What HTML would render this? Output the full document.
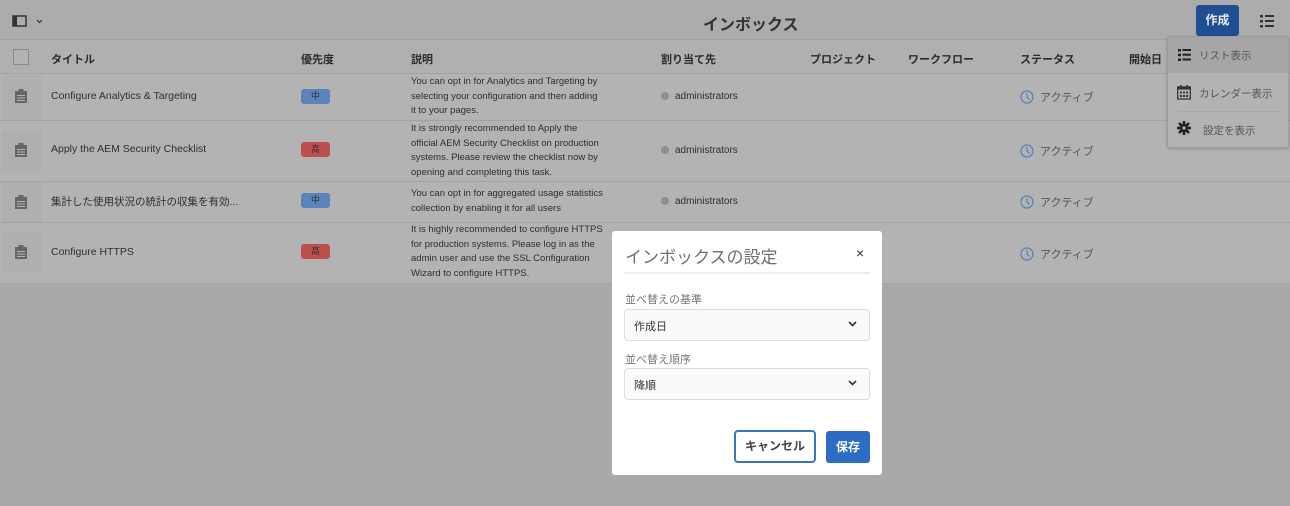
<!DOCTYPE html><html><head><meta charset="utf-8"><style>
*{box-sizing:border-box;margin:0;padding:0}
body{width:1290px;height:506px;overflow:hidden;background:#a9a9a9;font-family:"Liberation Sans","Noto Sans CJK JP",sans-serif;color:#333;position:relative;font-size:11px}
.a{position:absolute}
.top{left:0;top:0;width:1290px;height:40px;background:#acacac;border-bottom:1px solid #a2a2a2}
.row{left:0;width:1290px;background:#b3b3b3;border-bottom:1px solid #a3a3a3}
.hd{font-weight:bold;font-size:11px;color:#2b2b2b;top:51px}
.t{font-size:10.5px;color:#2e2e2e}
.d{font-size:9.5px;color:#2e2e2e;line-height:14.5px;left:411px;white-space:nowrap}
.ic{left:2px;width:40px;background:#afafaf}
.badge{left:301px;width:29px;height:15px;border-radius:3px;font-size:9px;text-align:center;line-height:15px;color:#333}
.adm{left:661px;font-size:10px;color:#2e2e2e}
.adm:before{content:"";display:inline-block;width:8px;height:8px;border-radius:50%;background:#8f8f8f;margin-right:6px;vertical-align:-1px}
.st{left:1020px;font-size:11px;color:#555}
.st svg{vertical-align:-3px;margin-right:6px}
</style></head><body>
<div class="a top"></div>
<svg class="a" style="left:12px;top:15px" width="30" height="12"><rect x="1" y="1" width="13" height="10" fill="none" stroke="#333" stroke-width="1.5"/><rect x="1" y="1" width="4" height="10" fill="#333"/><path d="M25 5l2.5 2.5 2.5-2.5" fill="none" stroke="#333" stroke-width="1.2"/></svg>
<div class="a" style="left:703px;top:11px;font-size:16px;font-weight:bold;color:#333">インボックス</div>
<div class="a" style="left:1196px;top:5px;width:43px;height:31px;background:#1f4f92;border-radius:3px;color:#e8e8e8;font-weight:bold;font-size:12px;text-align:center;line-height:31px">作成</div>
<svg class="a" style="left:1260px;top:15px" width="14" height="13"><g fill="#333"><rect x="0" y="0" width="3" height="2.5"/><rect x="0" y="5" width="3" height="2.5"/><rect x="0" y="10" width="3" height="2.5"/><rect x="5" y="0" width="9" height="2"/><rect x="5" y="5" width="9" height="2"/><rect x="5" y="10" width="9" height="2"/></g></svg>

<div class="a row" style="top:40px;height:34px;background:#b0b0b0"></div>
<div class="a" style="left:13px;top:49px;width:16px;height:16px;border:1px solid #8a8a8a;background:#b3b3b3"></div>
<div class="a hd" style="left:51px">タイトル</div>
<div class="a hd" style="left:301px">優先度</div>
<div class="a hd" style="left:411px">説明</div>
<div class="a hd" style="left:661px">割り当て先</div>
<div class="a hd" style="left:810px">プロジェクト</div>
<div class="a hd" style="left:908px">ワークフロー</div>
<div class="a hd" style="left:1020px">ステータス</div>
<div class="a hd" style="left:1129px">開始日</div>

<div class="a row" style="top:74px;height:47px"></div>
<div class="a row" style="top:121px;height:61px"></div>
<div class="a row" style="top:182px;height:41px"></div>
<div class="a row" style="top:223px;height:61px"></div>
<div class="a ic" style="top:75px;height:44px"></div>
<div class="a ic" style="top:130px;height:41px"></div>
<div class="a ic" style="top:182px;height:40px"></div>
<div class="a ic" style="top:233px;height:40px"></div>

<svg width="0" height="0" style="position:absolute"><defs><symbol id="clip" viewBox="0 0 12 14"><rect x="0" y="2" width="12" height="12" fill="#666"/><rect x="3.5" y="0" width="5" height="3.5" fill="#666"/><g fill="#b3b3b3"><rect x="2" y="6" width="8" height="1"/><rect x="2" y="8.5" width="8" height="1"/><rect x="2" y="11" width="8" height="1"/></g></symbol>
<symbol id="clk" viewBox="0 0 14 14"><circle cx="7" cy="7" r="6" fill="none" stroke="#5b82b8" stroke-width="1.3"/><path d="M7 3v4l2.5 2.5" fill="none" stroke="#5b82b8" stroke-width="1.3"/></symbol></defs></svg>
<svg class="a" style="left:15px;top:89px" width="12" height="14"><use href="#clip"/></svg>
<svg class="a" style="left:15px;top:143px" width="12" height="14"><use href="#clip"/></svg>
<svg class="a" style="left:15px;top:195px" width="12" height="14"><use href="#clip"/></svg>
<svg class="a" style="left:15px;top:245px" width="12" height="14"><use href="#clip"/></svg>

<div class="a t" style="left:51px;top:90px">Configure Analytics &amp; Targeting</div>
<div class="a t" style="left:51px;top:143px">Apply the AEM Security Checklist</div>
<div class="a t" style="left:51px;top:194px">集計した使用状況の統計の収集を有効...</div>
<div class="a t" style="left:51px;top:246px">Configure HTTPS</div>

<div class="a badge" style="top:89px;background:#5b84bd">中</div>
<div class="a badge" style="top:142px;background:#bf4f4c">高</div>
<div class="a badge" style="top:193px;background:#5b84bd">中</div>
<div class="a badge" style="top:244px;background:#bf4f4c">高</div>

<div class="a d" style="top:75px">You can opt in for Analytics and Targeting by<br>selecting your configuration and then adding<br>it to your pages.</div>
<div class="a d" style="top:122px">It is strongly recommended to Apply the<br>official AEM Security Checklist on production<br>systems. Please review the checklist now by<br>opening and completing this task.</div>
<div class="a d" style="top:187px">You can opt in for aggregated usage statistics<br>collection by enabling it for all users</div>
<div class="a d" style="top:223px">It is highly recommended to configure HTTPS<br>for production systems. Please log in as the<br>admin user and use the SSL Configuration<br>Wizard to configure HTTPS.</div>

<div class="a adm" style="top:91px">administrators</div>
<div class="a adm" style="top:145px">administrators</div>
<div class="a adm" style="top:196px">administrators</div>
<div class="a st" style="top:89px"><svg width="14" height="14"><use href="#clk"/></svg>アクティブ</div>
<div class="a st" style="top:143px"><svg width="14" height="14"><use href="#clk"/></svg>アクティブ</div>
<div class="a st" style="top:194px"><svg width="14" height="14"><use href="#clk"/></svg>アクティブ</div>
<div class="a st" style="top:246px"><svg width="14" height="14"><use href="#clk"/></svg>アクティブ</div>

<div class="a" style="left:1167px;top:36px;width:122px;height:112px;background:#b3b3b3;border:1px solid #9c9c9c;border-radius:3px;box-shadow:0 1px 3px rgba(0,0,0,.2)"></div>
<div class="a" style="left:1168px;top:37px;width:120px;height:36px;background:#a6a6a6"></div>
<svg class="a" style="left:1178px;top:49px" width="13" height="12"><g fill="#222"><rect x="0" y="0" width="3" height="2.5"/><rect x="0" y="4.7" width="3" height="2.5"/><rect x="0" y="9.5" width="3" height="2.5"/><rect x="4.5" y="0" width="8.5" height="2"/><rect x="4.5" y="4.7" width="8.5" height="2"/><rect x="4.5" y="9.5" width="8.5" height="2"/></g></svg>
<div class="a" style="left:1199px;top:48px;font-size:10.5px;color:#555">リスト表示</div>
<svg class="a" style="left:1177px;top:85px" width="14" height="15"><rect x="0.7" y="2" width="12.6" height="12" fill="none" stroke="#333" stroke-width="1.3"/><rect x="0.7" y="2" width="12.6" height="2.5" fill="#333"/><g fill="#333"><rect x="3" y="0" width="1.5" height="3"/><rect x="9.5" y="0" width="1.5" height="3"/><rect x="3" y="6.5" width="2" height="2"/><rect x="6" y="6.5" width="2" height="2"/><rect x="9" y="6.5" width="2" height="2"/><rect x="3" y="10" width="2" height="2"/><rect x="6" y="10" width="2" height="2"/><rect x="9" y="10" width="2" height="2"/></g></svg>
<div class="a" style="left:1199px;top:86px;font-size:10.5px;color:#555">カレンダー表示</div>
<div class="a" style="left:1178px;top:111px;width:105px;height:1px;background:#a9a9a9"></div>
<svg class="a" style="left:1177px;top:121px" width="14" height="14" viewBox="0 0 14 14"><g fill="#222"><circle cx="7" cy="7" r="4.5"/><g stroke="#222" stroke-width="2.6"><path d="M7 0v14M0 7h14M2 2l10 10M12 2L2 12"/></g></g><circle cx="7" cy="7" r="1.6" fill="#b3b3b3"/></svg>
<div class="a" style="left:1203px;top:123px;font-size:10.5px;color:#555">設定を表示</div>

<div class="a" style="left:612px;top:231px;width:270px;height:244px;background:#fff;border-radius:3px"></div>
<div class="a" style="left:625px;top:243px;font-size:17px;color:#707070">インボックスの設定</div>
<div class="a" style="left:856px;top:245px;font-size:14px;color:#333">×</div>
<div class="a" style="left:624px;top:272px;width:246px;height:2px;background:#eee"></div>
<div class="a" style="left:625px;top:291px;font-size:11px;color:#777">並べ替えの基準</div>
<div class="a" style="left:624px;top:309px;width:246px;height:32px;border:1px solid #ddd;border-radius:4px;background:#fafafa"></div>
<div class="a" style="left:634px;top:318px;font-size:11px;color:#333">作成日</div>
<div class="a" style="left:625px;top:351px;font-size:11px;color:#777">並べ替え順序</div>
<div class="a" style="left:624px;top:368px;width:246px;height:32px;border:1px solid #ddd;border-radius:4px;background:#fafafa"></div>
<div class="a" style="left:634px;top:377px;font-size:11px;color:#333">降順</div>
<svg class="a" style="left:848px;top:321px" width="9" height="6"><path d="M1 1l3.5 3.5L8 1" fill="none" stroke="#333" stroke-width="1.6"/></svg>
<svg class="a" style="left:848px;top:380px" width="9" height="6"><path d="M1 1l3.5 3.5L8 1" fill="none" stroke="#333" stroke-width="1.6"/></svg>
<div class="a" style="left:734px;top:430px;width:82px;height:33px;border:2px solid #3b74c4;border-radius:4px;background:#fff;font-weight:bold;font-size:12px;color:#444;text-align:center;line-height:29px">キャンセル</div>
<div class="a" style="left:826px;top:431px;width:44px;height:32px;border-radius:3px;background:#2c6dc3;font-weight:bold;font-size:12px;color:#fff;text-align:center;line-height:32px">保存</div>
</body></html>
